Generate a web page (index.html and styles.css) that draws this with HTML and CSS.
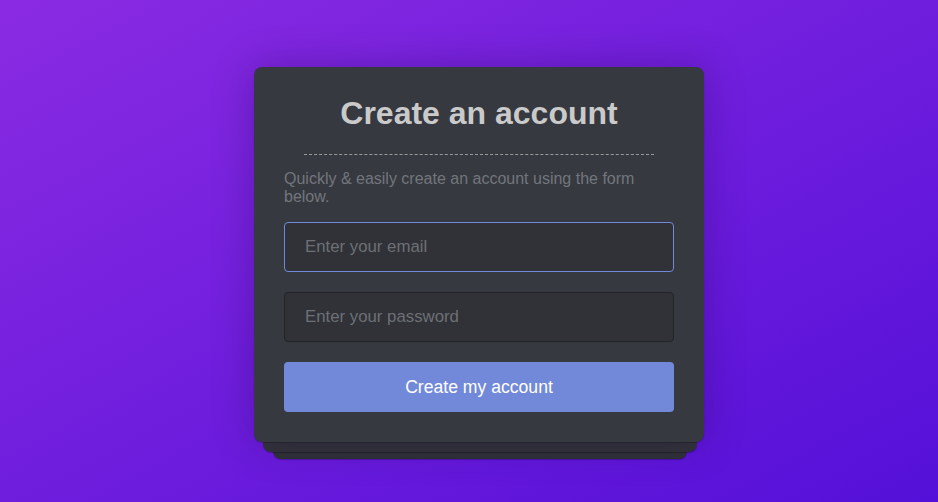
FILE: index.html
```html
<!DOCTYPE html>
<html lang="en">
<head>
<meta charset="utf-8">
<title>Create an account</title>
<link rel="stylesheet" href="styles.css">
</head>
<body>
<main class="page">
  <form class="card" onsubmit="return false">
    <h1 class="card-title">Create an account</h1>
    <p class="card-text">Quickly &amp; easily create an account using the form below.</p>
    <div class="fields">
      <input class="field field-focus" type="email" placeholder="Enter your email">
      <input class="field" type="password" placeholder="Enter your password">
      <button class="submit" type="submit">Create my account</button>
    </div>
  </form>
</main>
</body>
</html>
```

FILE: styles.css
```css
html, body {
  margin: 0;
  height: 100%;
}

body {
  background: linear-gradient(to bottom right, #8a2be2, #5410d8);
  font-family: "Liberation Sans", Arial, sans-serif;
}

.page {
  min-height: 100vh;
  box-sizing: border-box;
  display: flex;
  align-items: center;
  justify-content: center;
  padding: 6px 0 0 20px;
}

.card {
  position: relative;
  width: 450px;
  box-sizing: border-box;
  padding: 28px 30px 30px;
  background: #36393f;
  border-radius: 8px;
  box-shadow:
    0 1px 1px rgba(0, 0, 0, 0.2),
    0 0 40px rgba(30, 0, 70, 0.3);
}

.card::before,
.card::after {
  content: "";
  position: absolute;
  height: 40px;
  border-radius: 8px;
  box-shadow: 0 1px 1px rgba(0, 0, 0, 0.25);
}

.card::before {
  left: 9px;
  right: 7px;
  bottom: -10px;
  background: #323439;
  z-index: -1;
}

.card::after {
  left: 19px;
  right: 17px;
  bottom: -17px;
  background: #2f3237;
  z-index: -2;
}

.card-title {
  margin: 0 20px;
  padding-bottom: 22px;
  border-bottom: 1px dashed #9a9a9a;
  font-size: 32px;
  line-height: 37px;
  font-weight: bold;
  text-align: center;
  color: #cacaca;
}

.card-text {
  margin: 15px 0 16px;
  font-size: 16px;
  color: #72767d;
}

.fields {
  display: flex;
  flex-direction: column;
  gap: 20px;
}

.field {
  height: 50px;
  box-sizing: border-box;
  margin: 0;
  padding: 0 20px;
  background: #303237;
  border: 1px solid #222428;
  border-radius: 4px;
  font-family: inherit;
  font-size: 16.8px;
  color: #dcddde;
  outline: none;
}

.field::placeholder {
  color: #6d7076;
}

.field-focus {
  border-color: #7289da;
}

.submit {
  height: 50px;
  margin: 0;
  padding: 2px 0 0;
  border: 0;
  border-radius: 4px;
  background: #7289da;
  color: #ffffff;
  font-family: inherit;
  font-size: 17.6px;
  cursor: pointer;
}
```
